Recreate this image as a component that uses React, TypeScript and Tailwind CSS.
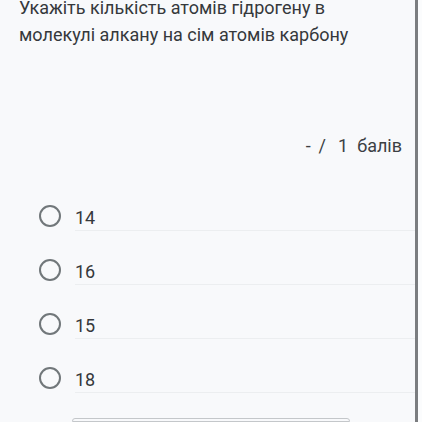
const options = ['14', '16', '15', '18'];

export default function App() {
  return (
    <div
      className="flex h-[422px] w-[422px] overflow-hidden bg-[#f8f9fb] text-[#35383b]"
      style={{ fontFamily: 'Roboto, "Noto Sans", sans-serif' }}
    >
      <div className="flex w-[415px] flex-col">
        {/* Question */}
        <div className="-mt-[6px] pl-[19px] pr-4 text-[18px] leading-[27px]">
          Укажіть кількість атомів гідрогену в молекулі алкану на сім атомів карбону
        </div>

        {/* Points */}
        <div className="mt-[86px] flex justify-end pr-[13px] text-[18px] leading-[24px] text-[#3c4043]">
          <span>-</span>
          <span className="ml-[8px]">/</span>
          <span className="ml-[12px]">1</span>
          <span className="ml-[9px]">балів</span>
        </div>

        {/* Options */}
        <div className="mt-[46px] flex flex-col">
          {options.map((o) => (
            <div key={o} className="flex h-[54px] items-start">
              <div className="ml-[39px] mt-[1px] h-[22px] w-[22px] shrink-0 rounded-full border-2 border-[#71777a]" />
              <div className="ml-[14px] flex h-[27px] flex-1 items-center border-b border-[#eceef0] text-[18px]">
                {o}
              </div>
            </div>
          ))}
        </div>

        <div className="ml-[72px] mt-[-2px] h-[20px] w-[278px] rounded-t-[3px] border border-[#c4c7ca]" />
      </div>
      <div className="w-[3px] bg-[#7b7d80]" />
      <div className="flex-1 bg-[#fbfcfd]" />
    </div>
  );
}
